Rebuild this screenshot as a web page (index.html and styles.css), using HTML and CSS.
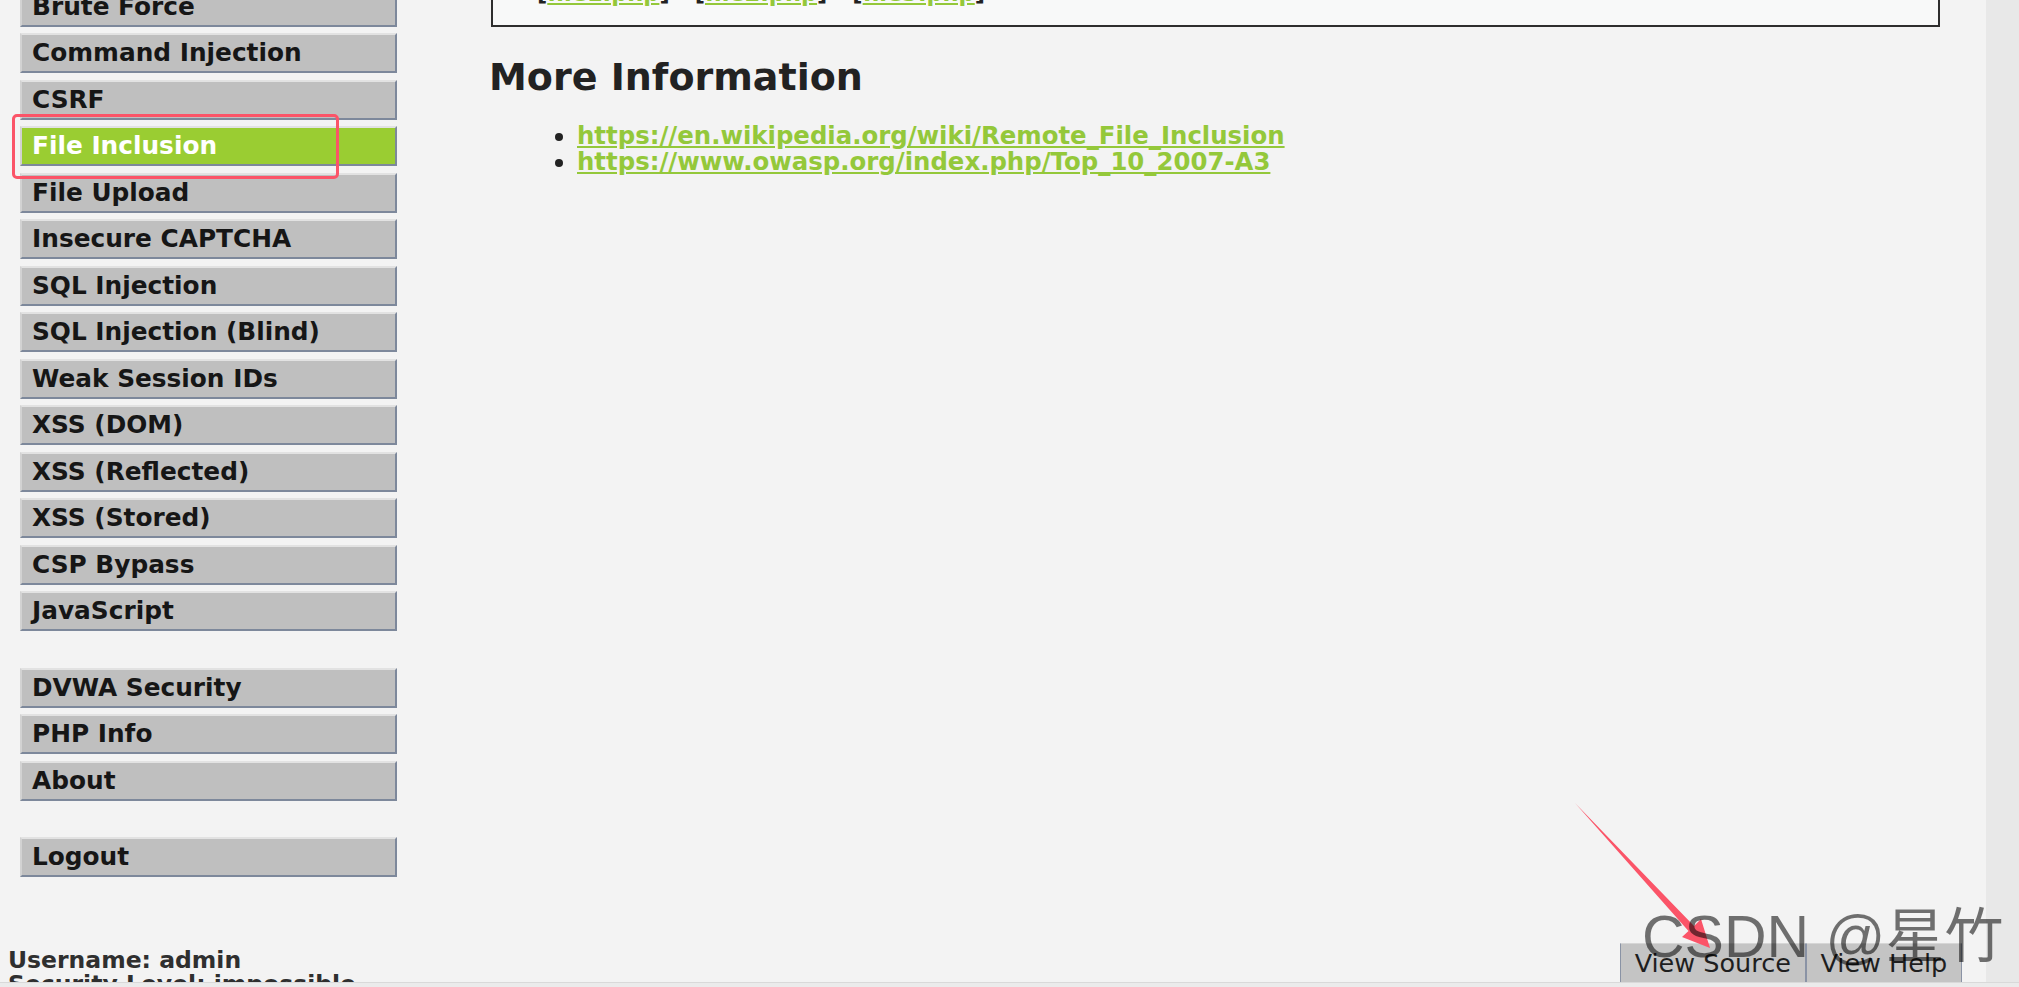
FILE: index.html
```html
<html>
<head>
<title>Vulnerability: File Inclusion :: Damn Vulnerable Web Application</title>
<link rel="stylesheet" href="styles.css">
</head>
<body>
<div class="container">
  <div class="menu_column">
    <ul class="menu_block">
      <li><a href="#">Brute Force</a></li>
      <li><a href="#">Command Injection</a></li>
      <li><a href="#">CSRF</a></li>
      <li class="selected"><a href="#">File Inclusion</a></li>
      <li><a href="#">File Upload</a></li>
      <li><a href="#">Insecure CAPTCHA</a></li>
      <li><a href="#">SQL Injection</a></li>
      <li><a href="#">SQL Injection (Blind)</a></li>
      <li><a href="#">Weak Session IDs</a></li>
      <li><a href="#">XSS (DOM)</a></li>
      <li><a href="#">XSS (Reflected)</a></li>
      <li><a href="#">XSS (Stored)</a></li>
      <li><a href="#">CSP Bypass</a></li>
      <li><a href="#">JavaScript</a></li>
    </ul>
    <ul class="menu_block">
      <li><a href="#">DVWA Security</a></li>
      <li><a href="#">PHP Info</a></li>
      <li><a href="#">About</a></li>
    </ul>
    <ul class="menu_block">
      <li><a href="#">Logout</a></li>
    </ul>
    <div class="status">
      Username: admin<br>
      Security Level: impossible
    </div>
  </div>

  <div class="main_body">
    <div class="vulnerable_code_area">
      <p>[<a href="#">file1.php</a>] - [<a href="#">file2.php</a>] - [<a href="#">file3.php</a>]</p>
    </div>

    <h2>More Information</h2>
    <ul class="more_info">
      <li><a href="#">https://en.wikipedia.org/wiki/Remote_File_Inclusion</a></li>
      <li><a href="#">https://www.owasp.org/index.php/Top_10_2007-A3</a></li>
    </ul>

    <div class="help_buttons"><input type="button" value="View Source"><input type="button" value="View Help"></div>
  </div>
</div>

<div class="scroll_track"></div>
<div class="bottom_edge"></div>

<!-- screenshot annotations -->
<div class="mark_box"></div>
<svg class="mark_arrow" width="160" height="170" viewBox="0 0 160 170">
  <polygon points="15,13 134,136 141,129 150,158 122,147 128.5,141" fill="#fb5468"/>
</svg>
<div class="watermark">CSDN @星竹</div>
</body>
</html>
```

FILE: styles.css
```css
body {
margin: 0;
background: #f3f3f3;
color: #2f2f2f;
font-family: "DejaVu Sans", Verdana, sans-serif;
overflow: hidden;
}
a:link, a:visited { color: #94c83a; }
.container { display: flex; align-items: flex-start; }

/* left menu */
.menu_column { width: 397px; flex: none; box-sizing: border-box; padding-left: 8px; margin-top: -13.5px; }
.menu_block { list-style: none; margin: 0 0 36.5px 12px; padding: 0; }
.menu_block li { margin-bottom: 6.5px; }
.menu_block li a {
display: block; height: 40px; box-sizing: border-box;
padding: 0 10px; line-height: 36px;
border: 2px solid; border-color: #e2e2e2 #7d889b #7d889b #d2d2d2;
background: #bfbfbf; color: #161616;
font-size: 24.8px; font-weight: bold; text-decoration: none; white-space: nowrap;
}
.menu_block li.selected a { background: #9acd32; color: #fff; }
.status { margin-top: 71px; font-size: 23.5px; font-weight: bold; line-height: 24px; color: #2f2f2f; white-space: nowrap; }

/* main area */
.main_body { width: 1471px; flex: none; margin-left: 94px; }
.vulnerable_code_area {
margin: -43.8px 22px 0 0; padding: 20px 20px 16.8px 44px;
border: 2px solid #2e2e2e; background: #f8f9f9;
}
.vulnerable_code_area p { margin: 0; font-size: 22.5px; font-weight: bold; line-height: 30px; color: #222; }
h2 { margin: 27.9px 0 0 -2px; font-size: 38px; line-height: 44px; color: #222; }
.more_info { margin: 24.3px 0 0; padding-left: 86px; font-size: 24.4px; line-height: 26px; color: #222; }
.more_info a { font-weight: bold; }

.help_buttons { display: flex; justify-content: flex-end; margin-top: 768.3px; }
.help_buttons input {
font-family: "DejaVu Sans", Verdana, sans-serif; font-size: 25.5px; color: #1e1e1e;
padding: 3.3px 13.8px 10px; margin: 0;
background: #c4c4c4;
border: 1px solid #c4c4c4; border-left-color: #8a93a5; border-right-color: #8a93a5; border-top-color: #d6d6d6;
}

.scroll_track { position: fixed; top: 0; right: 0; bottom: 0; width: 33px; background: #e8e8e8; }
.bottom_edge { position: fixed; left: 0; right: 0; bottom: 0; height: 4px; background: #ebebeb; border-top: 1px solid #d9d9d9; }

/* overlays */
.mark_box { position: absolute; left: 12px; top: 114px; width: 327px; height: 65px; box-sizing: border-box; border: 3px solid #fb5468; border-radius: 5px; }
.mark_arrow { position: absolute; left: 1560px; top: 790px; }
.watermark { position: absolute; left: 1642px; top: 908px; font-family: "Liberation Sans", "Noto Sans CJK SC", sans-serif; font-size: 59px; line-height: 59px; color: rgba(0,0,0,0.55); white-space: nowrap; }
```
